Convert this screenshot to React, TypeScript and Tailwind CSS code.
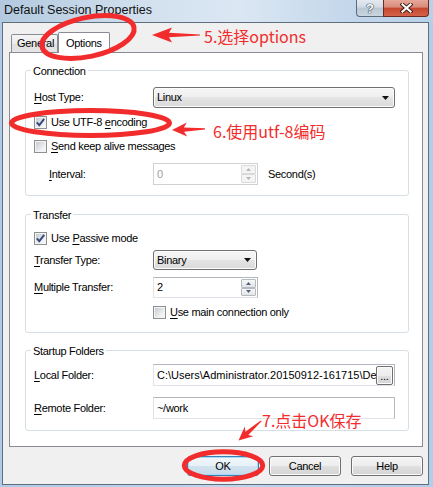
import React from "react";

const BTN_BG =
  "bg-[linear-gradient(#f4f4f4,#ededed_50%,#e0e0e0_50%,#d4d4d4)] shadow-[inset_0_0_0_1px_#fbfbfb]";
const RED = "#f22c2c";

function K({ children }: { children: React.ReactNode }) {
  return <span className="underline decoration-1 underline-offset-[2px]">{children}</span>;
}

function Check({ checked }: { checked?: boolean }) {
  return (
    <span className="relative flex w-[13px] h-[13px] shrink-0 border border-[#8e8f8f] bg-[#f4f4f4] p-[1px]">
      <span className="flex-1 bg-[linear-gradient(135deg,#c6cad0,#eef0f2_70%,#f8f8f8)]" />
      {checked && (
        <svg className="absolute left-0 top-0" width="11" height="11" viewBox="0 0 11 11">
          <path d="M1.8 5.4 L4.3 8.2 L9.2 1.8" fill="none" stroke="#36497e" strokeWidth="1.9" />
        </svg>
      )}
    </span>
  );
}

function Combo({ value, className }: { value: string; className: string }) {
  return (
    <div
      className={`flex items-center justify-between rounded-[3px] border border-[#707070] pl-[3px] pr-[5px] bg-[linear-gradient(#f6f6f6,#efefef_50%,#e4e4e4_50%,#dadada)] shadow-[inset_0_0_0_1px_#fcfcfc] ${className}`}
    >
      <span>{value}</span>
      <svg width="7" height="4" viewBox="0 0 7 4">
        <path d="M0 0H7L3.5 4Z" fill="#111" />
      </svg>
    </div>
  );
}

function SpinBtn({ up, disabled }: { up?: boolean; disabled?: boolean }) {
  return (
    <div
      className={`flex-1 flex items-center justify-center border rounded-[1px] ${
        disabled ? "border-[#dadada] bg-[#f4f4f4]" : "border-[#b5bac2] bg-[linear-gradient(#f8f8f8,#e4e4e4)]"
      }`}
    >
      <svg width="5" height="3" viewBox="0 0 5 3">
        <path d={up ? "M0 3H5L2.5 0Z" : "M0 0H5L2.5 3Z"} fill={disabled ? "#b7b7b7" : "#4c607f"} />
      </svg>
    </div>
  );
}

function Spin({ value, disabled }: { value: string; disabled?: boolean }) {
  return (
    <div
      className={`flex w-[105px] h-full border bg-white ${
        disabled ? "border-[#cfd1d4]" : "border-[#b3b6bd] border-b-[#dfe3ea] border-l-[#e0e2e8]"
      }`}
    >
      <span className={`flex-1 flex items-center pl-[3px] ${disabled ? "text-[#a0a0a0]" : ""}`}>{value}</span>
      <div className="flex flex-col w-[17px] p-[1px]">
        <SpinBtn up disabled={disabled} />
        <SpinBtn disabled={disabled} />
      </div>
    </div>
  );
}

function Group({
  title,
  className,
  children,
}: {
  title: string;
  className: string;
  children: React.ReactNode;
}) {
  return (
    <div className={`relative flex flex-col border border-[#d5dfe5] rounded-[3px] pl-[8px] ${className}`}>
      <span className="absolute -top-[6px] left-[5px] bg-white px-[2px] leading-[13px]">{title}</span>
      {children}
    </div>
  );
}

function Arrow({ x, y, angle, len, head, hw }: { x: number; y: number; angle: number; len: number; head: number; hw: number }) {
  const pts = [
    [0, 0],
    [head, -hw],
    [head - 3, -2.2],
    [len, -0.6],
    [len, 0.6],
    [head - 3, 2.2],
    [head, hw],
  ]
    .map((p) => p.join(","))
    .join(" ");
  return <polygon points={pts} fill={RED} transform={`translate(${x},${y}) rotate(${angle})`} />;
}

export default function App() {
  return (
    <div className="relative w-[433px] h-[487px] overflow-hidden flex flex-col bg-[linear-gradient(90deg,#aecbe8,#bcd4ec_50%,#b2cde9)] font-['Liberation_Sans',Arial,sans-serif] text-[11px] leading-[13px] tracking-[-0.3px] text-black">
      {/* title bar */}
      <div className="h-[22px] flex items-start bg-[linear-gradient(90deg,#b2c9df,#d3e1ef_35%,#dbe7f3_55%,#c4d7eb_80%,#b9d0e9)]">
        <span className="pl-[4px] pt-[2px] text-[12.5px] leading-[16px] tracking-[0px] text-[#111]">
          Default Session Properties
        </span>
        <div className="ml-auto mr-[4px] flex h-[17px]">
          <div className="w-[27px] h-full rounded-bl-[4px] border border-t-0 border-r-0 border-[#5d6c7c] bg-[linear-gradient(#e3e9f0,#d2dbe5_45%,#bac7d4_50%,#c9d5e1)] flex items-center justify-center">
            <span className="text-white font-bold text-[13px] leading-none tracking-normal [text-shadow:0_0_1px_#2a3440,0_0_1px_#2a3440,0_0_1px_#2a3440]">
              ?
            </span>
          </div>
          <div className="w-[46px] h-full rounded-br-[4px] border border-t-0 border-[#6b2a22] bg-[linear-gradient(#e6a79a,#d98b7b_45%,#c5472f_50%,#d4624a)] flex items-center justify-center">
            <svg width="13" height="10" viewBox="0 0 13 10">
              <path d="M2.5 1.5 L10.5 8.5 M10.5 1.5 L2.5 8.5" stroke="#3b1712" strokeWidth="4" strokeLinecap="square" />
              <path d="M2.5 1.5 L10.5 8.5 M10.5 1.5 L2.5 8.5" stroke="#ffffff" strokeWidth="2.2" strokeLinecap="square" />
            </svg>
          </div>
        </div>
      </div>

      {/* client area */}
      <div className="flex-1 ml-[2px] mr-[4px] mb-[2px] border border-[#5f6f7e] bg-[#f0f0f0] flex flex-col pl-[6px] pr-[5px]">
        {/* tabs */}
        <div className="h-[29px] flex items-end pl-[2px]">
          <div className="w-[47px] h-[18px] border border-b-0 border-[#898c95] rounded-t-[2px] bg-[linear-gradient(#f5f5f5,#ececec_50%,#dfdfdf_50%,#e6e6e6)] flex items-center pl-[5px]">
            General
          </div>
          <div className="relative z-10 -mb-[1px] w-[52px] h-[21px] border border-b-0 border-[#898c95] rounded-t-[2px] bg-white flex items-center pl-[7px]">
            Options
          </div>
        </div>

        {/* panel */}
        <div className="h-[395px] border border-[#898c95] bg-white pt-[17px] pl-[15px] pr-[13px] flex flex-col">
          <Group title="Connection" className="h-[126px]">
            <div className="mt-[16px] h-[21px] flex items-center">
              <span className="w-[119px]">
                <K>H</K>ost Type:
              </span>
              <Combo value="Linux" className="w-[242px] h-full" />
            </div>
            <div className="mt-[8px] h-[13px] flex items-center gap-[4px]">
              <Check checked />
              <span>
                Use UTF-8 <K>e</K>ncoding
              </span>
            </div>
            <div className="mt-[11px] h-[13px] flex items-center gap-[4px]">
              <Check />
              <span>
                <K>S</K>end keep alive messages
              </span>
            </div>
            <div className="mt-[10px] h-[22px] flex items-center pl-[15px]">
              <span className="w-[104px]">
                <K>I</K>nterval:
              </span>
              <Spin value="0" disabled />
              <span className="ml-[10px]">Second(s)</span>
            </div>
          </Group>

          <Group title="Transfer" className="mt-[18px] h-[119px]">
            <div className="mt-[17px] h-[13px] flex items-center gap-[4px]">
              <Check checked />
              <span>
                Use <K>P</K>assive mode
              </span>
            </div>
            <div className="mt-[5px] h-[20px] flex items-center">
              <span className="w-[119px]">
                <K>T</K>ransfer Type:
              </span>
              <Combo value="Binary" className="w-[104px] h-full" />
            </div>
            <div className="mt-[7px] h-[21px] flex items-center">
              <span className="w-[119px]">
                <K>M</K>ultiple Transfer:
              </span>
              <Spin value="2" />
            </div>
            <div className="mt-[8px] h-[13px] flex items-center gap-[4px] pl-[119px]">
              <Check />
              <span>
                <K>U</K>se main connection only
              </span>
            </div>
          </Group>

          <Group title="Startup Folders" className="mt-[17px] h-[81px]">
            <div className="mt-[13px] h-[22px] flex items-center">
              <span className="w-[119px]">
                <K>L</K>ocal Folder:
              </span>
              <div className="w-[242px] h-full flex items-center border border-[#b3b6bd] border-b-[#dfe3ea] border-l-[#e0e2e8] bg-white pl-[3px] pr-[1px]">
                <span className="flex-1 min-w-0 overflow-hidden whitespace-nowrap tracking-[0px]">
                  C:\Users\Administrator.20150912-161715\Des
                </span>
                <div className={`w-[17px] h-[19px] shrink-0 rounded-[2px] border border-[#707070] ${BTN_BG} flex items-end justify-center pb-[2px] leading-none`}>
                  ...
                </div>
              </div>
            </div>
            <div className="mt-[11px] h-[22px] flex items-center">
              <span className="w-[119px]">
                <K>R</K>emote Folder:
              </span>
              <div className="w-[242px] h-full flex items-center border border-[#b3b6bd] border-b-[#dfe3ea] border-l-[#e0e2e8] bg-white pl-[3px]">
                ~/work
              </div>
            </div>
          </Group>
        </div>

        {/* buttons */}
        <div className="mt-[9px] flex justify-end gap-[10px]">
          <button className="w-[72px] h-[20px] rounded-[3px] border border-[#3c7fb1] bg-[linear-gradient(#f2f8fc,#e6f0f7_50%,#d2e3ef_50%,#c6dbea)] shadow-[inset_0_0_0_1px_#9fdcfb]">
            OK
          </button>
          <button className={`w-[72px] h-[20px] rounded-[3px] border border-[#707070] ${BTN_BG}`}>Cancel</button>
          <button className={`w-[72px] h-[20px] rounded-[3px] border border-[#707070] ${BTN_BG}`}>Help</button>
        </div>
      </div>

      {/* annotations */}
      <svg className="absolute left-0 top-0 z-20 pointer-events-none" width="433" height="487" viewBox="0 0 433 487">
        <ellipse cx="88" cy="37" rx="47" ry="19.5" fill="none" stroke={RED} strokeWidth="5" transform="rotate(-12 88 37)" />
        <ellipse cx="90.5" cy="123" rx="79" ry="12.5" fill="none" stroke={RED} strokeWidth="5" />
        <ellipse cx="223.5" cy="465.5" rx="39.2" ry="13.7" fill="none" stroke={RED} strokeWidth="5" />
        <Arrow x={152} y={35} angle={0} len={48} head={20} hw={7.5} />
        <Arrow x={172} y={130} angle={-2} len={33} head={15} hw={7} />
        <Arrow x={238.5} y={440.5} angle={-40.9} len={30} head={14} hw={6.5} />
      </svg>
      <span className="absolute z-20 left-[204px] top-[28px] text-[16px] leading-[16px] tracking-normal whitespace-nowrap text-[#f22c2c] font-['Noto_Sans_CJK_SC','Noto_Sans',sans-serif]">
        5.选择options
      </span>
      <span className="absolute z-20 left-[213px] top-[123px] text-[16px] leading-[16px] tracking-normal whitespace-nowrap text-[#f22c2c] font-['Noto_Sans_CJK_SC','Noto_Sans',sans-serif]">
        6.使用utf-8编码
      </span>
      <span className="absolute z-20 left-[262px] top-[412px] text-[16px] leading-[16px] tracking-normal whitespace-nowrap text-[#f22c2c] font-['Noto_Sans_CJK_SC','Noto_Sans',sans-serif]">
        7.点击OK保存
      </span>
    </div>
  );
}
